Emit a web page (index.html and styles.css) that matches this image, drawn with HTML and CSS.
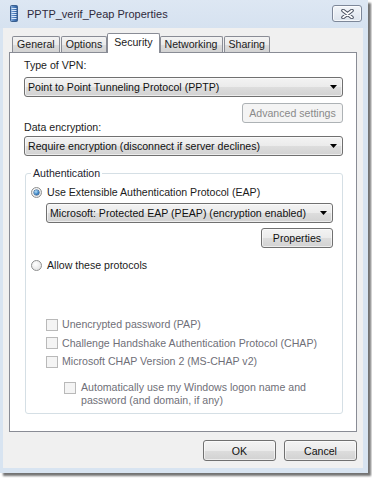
FILE: index.html
```html
<!DOCTYPE html>
<html lang="en">
<head>
    <meta charset="UTF-8">
    <meta name="viewport" content="width=device-width, initial-scale=1.0">
    <title>PPTP_verif_Peap Properties</title>
    <link rel="stylesheet" href="styles.css">
</head>
<body>

    <div class="window">
        <!-- Title bar -->
        <div class="titlebar">
            <svg class="title-icon" width="8" height="17" viewBox="0 0 8 17">
                <defs>
                    <linearGradient id="ico" x1="0" y1="0" x2="1" y2="0">
                        <stop offset="0" stop-color="#8fb2dc"/>
                        <stop offset="0.5" stop-color="#4d7fbf"/>
                        <stop offset="1" stop-color="#2b5690"/>
                    </linearGradient>
                </defs>
                <rect x="0.5" y="0.5" width="7" height="16" rx="1" fill="url(#ico)" stroke="#3a5f8f"/>
                <path d="M1.5 3.5h5M1.5 5.5h5M1.5 7.5h5M1.5 9.5h5M1.5 11.5h5M1.5 13.5h5" stroke="#d7e6f7" stroke-width="1"/>
            </svg>
            <span class="title-text">PPTP_verif_Peap Properties</span>
            <div class="close-btn">
                <svg width="13" height="10" viewBox="0 0 13 10">
                    <path d="M2 1.5l9 7M11 1.5l-9 7" stroke="#4a5262" stroke-width="3.6" stroke-linecap="round"/>
                    <path d="M2 1.5l9 7M11 1.5l-9 7" stroke="#ffffff" stroke-width="1.6" stroke-linecap="round"/>
                </svg>
            </div>
        </div>

        <div class="client">
            <!-- Tabs -->
            <div class="tabs">
                <div class="tab">General</div>
                <div class="tab">Options</div>
                <div class="tab active">Security</div>
                <div class="tab">Networking</div>
                <div class="tab">Sharing</div>
            </div>

            <div class="panel">
                <div class="label vpn-label">Type of VPN:</div>
                <div class="combo first-combo">
                    <span class="combo-text">Point to Point Tunneling Protocol (PPTP)</span>
                    <svg class="arrow" width="7" height="4" viewBox="0 0 7 4"><path d="M0 0h7L3.5 4z" fill="#000"/></svg>
                </div>
                <div class="button-row adv-row">
                    <button class="btn disabled adv-btn">Advanced settings</button>
                </div>
                <div class="label enc-label">Data encryption:</div>
                <div class="combo">
                    <span class="combo-text">Require encryption (disconnect if server declines)</span>
                    <svg class="arrow" width="7" height="4" viewBox="0 0 7 4"><path d="M0 0h7L3.5 4z" fill="#000"/></svg>
                </div>

                <fieldset class="group">
                    <legend>Authentication</legend>
                    <div class="option first-option">
                        <span class="radio on"></span>
                        <span>Use Extensible Authentication Protocol (EAP)</span>
                    </div>
                    <div class="combo eap-combo">
                        <span class="combo-text">Microsoft: Protected EAP (PEAP) (encryption enabled)</span>
                        <svg class="arrow" width="7" height="4" viewBox="0 0 7 4"><path d="M0 0h7L3.5 4z" fill="#000"/></svg>
                    </div>
                    <div class="button-row props-row">
                        <button class="btn props-btn">Properties</button>
                    </div>
                    <div class="option second-option">
                        <span class="radio"></span>
                        <span>Allow these protocols</span>
                    </div>

                    <div class="checks">
                        <div class="check-row pap">
                            <span class="checkbox"></span>
                            <span>Unencrypted password (PAP)</span>
                        </div>
                        <div class="check-row">
                            <span class="checkbox"></span>
                            <span>Challenge Handshake Authentication Protocol (CHAP)</span>
                        </div>
                        <div class="check-row">
                            <span class="checkbox"></span>
                            <span>Microsoft CHAP Version 2 (MS-CHAP v2)</span>
                        </div>
                        <div class="check-row auto-row">
                            <span class="checkbox"></span>
                            <span>Automatically use my Windows logon name and<br>password (and domain, if any)</span>
                        </div>
                    </div>
                </fieldset>
            </div>

            <div class="footer">
                <button class="btn dlg-btn">OK</button>
                <button class="btn dlg-btn">Cancel</button>
            </div>
        </div>
    </div>

</body>
</html>
```

FILE: styles.css
```css
body {
    margin: 0;
    width: 372px;
    height: 478px;
    background: #ffffff;
    font-family: "Liberation Sans", Arial, sans-serif;
    font-size: 10.6px;
    color: #1b1b1b;
    overflow: hidden;
}

.window {
    width: 368px;
    height: 473px;
    background: #d8e4f1;
    box-shadow: 3px 3px 2px rgba(0, 0, 0, 0.55);
    display: flex;
    flex-direction: column;
}

/* Title bar */
.titlebar {
    height: 28px;
    display: flex;
    align-items: center;
    padding: 0 6px 0 10px;
    background: linear-gradient(#dde7f3, #d6e2f0);
}

.title-icon {
    flex: none;
    margin-top: -1px;
}

.title-text {
    font-size: 11px;
    color: #2f2a3c;
    margin-left: 9px;
}

.close-btn {
    margin-left: auto;
    align-self: flex-start;
    margin-top: 5px;
    width: 30px;
    height: 17px;
    box-sizing: border-box;
    border: 1px solid #7d8799;
    border-radius: 3px;
    background: linear-gradient(#f2f5f9, #dde4ed);
    box-shadow: inset 0 0 0 1px rgba(255, 255, 255, 0.7);
    display: flex;
    align-items: center;
    justify-content: center;
}

/* Client area */
.client {
    flex: 1;
    margin: 0 5px 5px 3px;
    background: #f0f0f0;
    padding: 5px 6px 0 6px;
    display: flex;
    flex-direction: column;
}

.tabs {
    display: flex;
    align-items: flex-end;
    gap: 1px;
    padding-left: 3px;
}

.tab {
    height: 15px;
    line-height: 15px;
    padding: 0 4px;
    border: 1px solid #898c95;
    border-bottom: none;
    border-radius: 2px 2px 0 0;
    background: linear-gradient(#f3f3f3, #ebebeb 50%, #dddddd 51%, #d3d3d3);
    color: #1b1b1b;
}

.tab.active {
    position: relative;
    z-index: 1;
    height: 19px;
    line-height: 17px;
    padding: 0 6px;
    margin: 0 -1px -1px -1px;
    background: #ffffff;
}

.panel {
    height: 380px;
    box-sizing: border-box;
    border: 1px solid #898c95;
    background: #ffffff;
    padding: 0 13px 0 14px;
}

.label {
    line-height: 15px;
}

.vpn-label {
    margin-top: 5px;
}

.enc-label {
    margin-top: -3px;
}

.combo {
    height: 20px;
    box-sizing: border-box;
    display: flex;
    align-items: center;
    padding: 0 5px 0 3px;
    border: 1px solid #707070;
    border-radius: 3px;
    background: linear-gradient(#f3f3f3, #ebebeb 50%, #dddddd 51%, #d2d2d2);
    box-shadow: inset 0 0 0 1px rgba(255, 255, 255, 0.6);
    color: #111111;
}

.first-combo {
    margin-top: 4px;
}

.enc-label + .combo {
    margin-top: 1px;
}

.combo-text {
    flex: 1;
    white-space: nowrap;
}

.arrow {
    flex: none;
}

.button-row {
    display: flex;
    justify-content: flex-end;
}

.adv-row {
    margin-top: 6px;
}

.btn {
    font-family: inherit;
    font-size: inherit;
    color: #111111;
    height: 20px;
    padding: 0;
    box-sizing: border-box;
    border: 1px solid #707070;
    border-radius: 3px;
    background: linear-gradient(#f3f3f3, #ebebeb 50%, #dddddd 51%, #d2d2d2);
    box-shadow: inset 0 0 0 1px rgba(255, 255, 255, 0.6);
}

.btn.disabled {
    border-color: #adb2b5;
    background: #f4f4f4;
    color: #8a8a8a;
    box-shadow: none;
}

.adv-btn {
    width: 101px;
}

/* Authentication group */
.group {
    margin: 10px 0 0 1px;
    padding: 0 9px 6px 5px;
    border: 1px solid #d5dfe5;
    border-radius: 3px;
    min-inline-size: 0;
}

.group legend {
    padding: 0 2px;
    line-height: 15px;
    color: #1e2530;
}

.option {
    display: flex;
    align-items: center;
    gap: 5px;
    line-height: 15px;
}

.first-option {
    margin-top: 3.5px;
}

.second-option {
    margin-top: 10px;
}

.radio {
    width: 11px;
    height: 11px;
    box-sizing: border-box;
    border-radius: 50%;
    border: 1px solid #8e8f8f;
    background: radial-gradient(circle at 40% 35%, #ffffff, #dcdcdc);
    display: flex;
    align-items: center;
    justify-content: center;
}

.radio.on::after {
    content: "";
    width: 5px;
    height: 5px;
    border-radius: 50%;
    background: radial-gradient(circle at 40% 35%, #b8e3fb, #2f79bd 60%, #123f72);
    box-shadow: 0 0 0 0.5px #1d4e82;
}

.eap-combo {
    margin: 3.5px 0 0 15px;
}

.props-row {
    margin-top: 5px;
}

.props-btn {
    width: 72px;
}

.checks {
    margin-left: 15px;
    margin-top: 44px;
    color: #6f6f78;
}

.check-row {
    display: flex;
    align-items: center;
    gap: 4px;
    line-height: 15px;
    margin-top: 3.5px;
}

.check-row.pap {
    margin-top: 0;
}

.checkbox {
    flex: none;
    width: 12px;
    height: 12px;
    box-sizing: border-box;
    border: 1px solid #b9b9b9;
    background: #f4f4f4;
}

.auto-row {
    align-items: flex-start;
    margin-top: 12px;
    margin-left: 18px;
    gap: 5px;
    line-height: 13px;
}

.auto-row .checkbox {
    margin-top: 1px;
}

/* Dialog buttons */
.footer {
    display: flex;
    justify-content: flex-end;
    gap: 8px;
    margin-top: 8px;
}

.dlg-btn {
    width: 73px;
    height: 21px;
}
```
